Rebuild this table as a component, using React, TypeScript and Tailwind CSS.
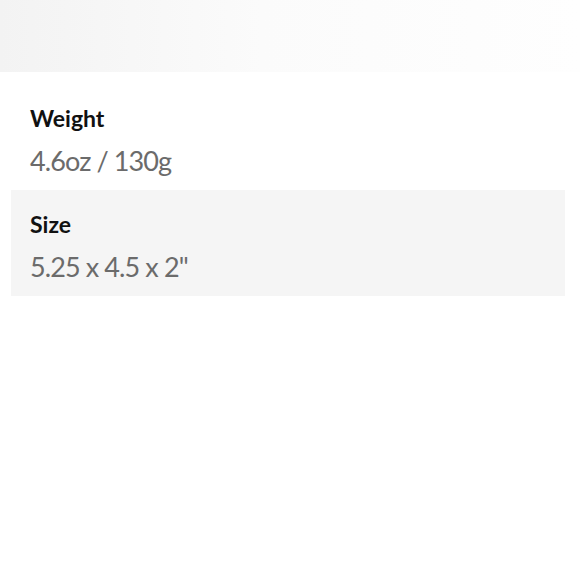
export default function App() {
  const specs = [
    { label: 'Weight', value: '4.6oz / 130g' },
    { label: 'Size', value: '5.25 x 4.5 x 2"' },
  ]

  return (
    <div className="w-[580px] h-[580px] bg-white font-['Lato','Liberation_Sans',sans-serif]">
      <div className="h-[72px] bg-gradient-to-r from-[#f3f3f3] via-[#fbfbfb] via-45% to-[#fefefe]" />
      <div className="pt-[12px] pl-[11px] pr-[15px]">
        {specs.map((spec, index) => (
          <div
            key={spec.label}
            className={`h-[106px] pl-[19px] pt-[20px] ${index % 2 === 1 ? 'bg-[#f5f5f5]' : ''}`}
          >
            <p className="text-[23px] leading-[28px] font-bold text-[#111]">
              {spec.label}
            </p>
            <p className="mt-[12px] text-[27px] leading-[34px] tracking-[-0.9px] text-[#6b6b6b]">
              {spec.value}
            </p>
          </div>
        ))}
      </div>
    </div>
  )
}
